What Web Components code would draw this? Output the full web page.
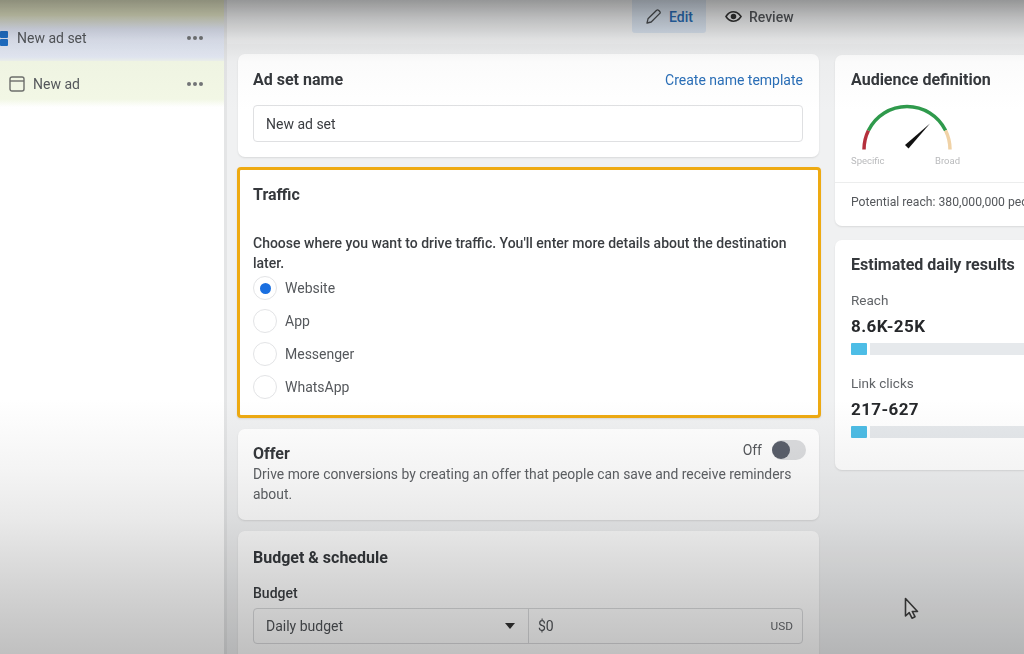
<!DOCTYPE html>
<html lang="en">
<head>
<meta charset="utf-8">
<title>New ad set</title>
<style>
  html, body { margin: 0; height: 654px; overflow: hidden; background: #f0f1f2; }
  body { font-family: Roboto, "Liberation Sans", sans-serif; color: #2f3237; }
</style>
</head>
<body>
<ads-shell>
  <side-nav slot="nav">
    <nav-row tone="set" label="New ad set"></nav-row>
    <nav-row tone="ad" label="New ad"></nav-row>
  </side-nav>
  <top-tabs slot="tabs"></top-tabs>

  <ad-card slot="main" class="name-card">
    <card-head title="Ad set name"><a-link>Create name template</a-link></card-head>
    <text-box value="New ad set"></text-box>
  </ad-card>

  <ad-card slot="main" highlight>
    <card-head title="Traffic"></card-head>
    <traffic-options></traffic-options>
  </ad-card>

  <ad-card slot="main">
    <offer-block></offer-block>
  </ad-card>

  <ad-card slot="main" grow>
    <card-head title="Budget &amp; schedule"></card-head>
    <budget-row></budget-row>
  </ad-card>

  <ad-card slot="side" class="side-card">
    <audience-gauge></audience-gauge>
  </ad-card>

  <ad-card slot="side" class="side-card">
    <daily-results>
      <result-metric label="Reach" value="8.6K-25K"></result-metric>
      <result-metric label="Link clicks" value="217-627"></result-metric>
    </daily-results>
  </ad-card>
</ads-shell>

<script>
class AdsShell extends HTMLElement {
  constructor() {
    super();
    this.attachShadow({ mode: "open" });
    this.shadowRoot.innerHTML = `
      <style>
        :host { display: flex; width: 1024px; height: 654px; position: relative; overflow: hidden; }
        .nav { width: 224px; flex: none; background: #fff; border-right: 3px solid #e4e5e6; filter: blur(.4px); }
        .content { flex: 1; min-width: 0; display: flex; flex-direction: column; filter: blur(.4px); }
        .tabs { height: 44px; flex: none; background: #f3f4f5; }
        .columns { flex: 1; min-height: 0; display: flex; gap: 14px; padding: 10px 0 0 10px; }
        .main { width: 584px; flex: none; display: flex; flex-direction: column; gap: 11px; }
        .side { flex: 1; min-width: 0; display: flex; flex-direction: column; gap: 13px; margin-right: -12px; }
        .shade {
          position: absolute; inset: 0; pointer-events: none; mix-blend-mode: multiply;
          background: linear-gradient(to bottom,
            #9d9d9d 0, #c6c6c6 18px, #ececec 40px, #fbfbfb 62px, #fff 110px,
            #fff 400px, #f4f4f4 470px, #e9e9e9 520px, #d6d6d6 580px, #c0c0c0 654px);
        }
        .cursor { position: absolute; left: 904px; top: 597px; }
      </style>
      <div class="nav"><slot name="nav"></slot></div>
      <div class="content">
        <div class="tabs"><slot name="tabs"></slot></div>
        <div class="columns">
          <div class="main"><slot name="main"></slot></div>
          <div class="side"><slot name="side"></slot></div>
        </div>
      </div>
      <div class="shade"></div>
      <svg class="cursor" width="18" height="26" viewBox="0 0 18 26">
        <path d="M1.5 1.5V19l3.7-3.4 2.8 5.6 3-1.5-2.7-5.2h5.2z" fill="#c9c9c9" stroke="#333" stroke-width="1.6" stroke-linejoin="round"/>
      </svg>
    `;
  }
}
customElements.define("ads-shell", AdsShell);

class SideNav extends HTMLElement {
  constructor() {
    super();
    this.attachShadow({ mode: "open" });
    this.shadowRoot.innerHTML = `
      <style>
        :host { display: block; }
        .tint { height: 15px; background: #e6e8c8; }
      </style>
      <div class="tint"></div>
      <slot></slot>
    `;
  }
}
customElements.define("side-nav", SideNav);

class NavRow extends HTMLElement {
  constructor() {
    super();
    this.attachShadow({ mode: "open" });
    const isSet = this.getAttribute("tone") === "set";
    const lead = isSet
      ? `<span class="mark"><i></i><i></i></span>`
      : `<svg class="page" width="16" height="16" viewBox="0 0 16 16" fill="none" stroke="#6d6f6c" stroke-width="1.4">
           <rect x="1" y="1" width="14" height="14" rx="2"/><path d="M1 5h14"/>
         </svg>`;
    this.shadowRoot.innerHTML = `
      <style>
        :host { display: flex; align-items: center; height: 46px; font-size: 14px; color: #55585c; }
        :host([tone="set"]) { background: linear-gradient(#e6e8c8 0, #e3e8f6 14px, #e6ebf6 42px, #eef2ee 46px); }
        :host([tone="ad"]) { background: linear-gradient(#f3f8e6 0, #f3f8e6 38px, #fff 46px); }
        .mark { width: 8px; margin: 0 9px 0 0; display: flex; flex-direction: column; gap: 1px; }
        .mark i { display: block; height: 7px; background: #1f70c8; border-radius: 1px; }
        .page { margin: 0 8px 0 9px; }
        .label { flex: 1; }
        .dots { display: flex; gap: 2px; margin-right: 21px; }
        .dots i { width: 4px; height: 4px; border-radius: 50%; background: #737578; }
      </style>
      ${lead}<span class="label">${this.getAttribute("label")}</span>
      <span class="dots"><i></i><i></i><i></i></span>
    `;
  }
}
customElements.define("nav-row", NavRow);

class TopTabs extends HTMLElement {
  constructor() {
    super();
    this.attachShadow({ mode: "open" });
    this.shadowRoot.innerHTML = `
      <style>
        :host { display: flex; height: 33px; padding-left: 405px; font-size: 14px; font-weight: 500; }
        .tab { display: flex; align-items: center; gap: 7px; padding: 0 13px; height: 33px; color: #55585c; }
        .on { background: #dbe5f1; color: #2a6db5; padding: 0 13px; border-radius: 0 0 3px 3px; }
        .tab + .tab { padding-left: 19px; }
      </style>
      <div class="tab on">
        <svg width="17" height="17" viewBox="0 0 17 17" fill="none" stroke="#4a4d50" stroke-width="1.3" stroke-linejoin="round">
          <path d="M2 15l1-4.2L11.6 2.2a1.3 1.3 0 0 1 1.9 0l1.3 1.3a1.3 1.3 0 0 1 0 1.9L6.2 14z"/>
        </svg>
        Edit
      </div>
      <div class="tab">
        <svg width="17" height="17" viewBox="0 0 17 17" fill="none" stroke="#333" stroke-width="1.6">
          <path d="M1 8.500C3 5.300 5.500 3.800 8.500 3.800s5.500 1.500 7.500 4.700c-2 3.200-4.500 4.700-7.500 4.700S3 11.700 1 8.500z"/>
          <circle cx="8.500" cy="8.500" r="2" fill="#333"/>
        </svg>
        Review
      </div>
    `;
  }
}
customElements.define("top-tabs", TopTabs);

class AdCard extends HTMLElement {
  constructor() {
    super();
    this.attachShadow({ mode: "open" });
    this.shadowRoot.innerHTML = `
      <style>
        :host {
          display: block; box-sizing: border-box; flex: none; background: #fff;
          border-radius: 7px; padding: 15px 16px 15px 15px; margin: 0 2px 0 1px;
          box-shadow: 0 1px 2px rgba(0,0,0,.1);
        }
        :host(.name-card) { height: 103px; --head-nudge: 1px; --box-gap: 15px; }
        :host(.side-card) { margin: 1px 0 0; padding: 15px 16px; }
        :host([highlight]) { height: 251px; margin: -1px 0 0; padding: 15px 13px; border: 3px solid #eeaa12; border-radius: 4px; }
        :host([grow]) { flex: 1; border-radius: 7px 7px 0 0; padding-top: 17px; }
      </style>
      <slot></slot>
    `;
  }
}
customElements.define("ad-card", AdCard);

class CardHead extends HTMLElement {
  constructor() {
    super();
    this.attachShadow({ mode: "open" });
    this.shadowRoot.innerHTML = `
      <style>
        :host { display: flex; justify-content: space-between; align-items: center; line-height: 20px; }
        h2 { margin: 0; padding-top: var(--head-nudge, 0); font-size: 16px; font-weight: 700; color: #35383c; }
      </style>
      <h2>${this.getAttribute("title")}</h2>
      <slot></slot>
    `;
  }
}
customElements.define("card-head", CardHead);

class ALink extends HTMLElement {
  constructor() {
    super();
    this.attachShadow({ mode: "open" });
    this.shadowRoot.innerHTML = `
      <style>:host { font-size: 14px; color: #2a6fb8; }</style>
      <slot></slot>
    `;
  }
}
customElements.define("a-link", ALink);

class TextBox extends HTMLElement {
  constructor() {
    super();
    this.attachShadow({ mode: "open" });
    this.shadowRoot.innerHTML = `
      <style>
        :host {
          display: flex; align-items: center; box-sizing: border-box; height: 37px; margin-top: var(--box-gap, 16px);
          padding: 0 12px; border: 1px solid #dfe0e2; border-radius: 4px; font-size: 14px; color: #3a3c40;
        }
      </style>
      ${this.getAttribute("value")}
    `;
  }
}
customElements.define("text-box", TextBox);

class TrafficOptions extends HTMLElement {
  constructor() {
    super();
    this.attachShadow({ mode: "open" });
    const opts = ["Website", "App", "Messenger", "WhatsApp"];
    this.shadowRoot.innerHTML = `
      <style>
        :host { display: block; padding-top: 28px; }
        p { margin: 0 0 -1.5px; font-size: 14px; line-height: 20px; font-weight: 500; color: #3a3d41; }
        .opt { display: flex; align-items: center; gap: 8px; height: 33px; font-size: 14px; color: #55585c; }
        .dot { box-sizing: border-box; width: 24px; height: 24px; border-radius: 50%; border: 1.5px solid #e3e4e6; display: flex; align-items: center; justify-content: center; }
        .dot i { width: 11px; height: 11px; border-radius: 50%; background: #1a6fe0; }
      </style>
      <p>Choose where you want to drive traffic. You'll enter more details about the destination later.</p>
      ${opts.map((o, n) => `<div class="opt"><span class="dot">${n === 0 ? "<i></i>" : ""}</span>${o}</div>`).join("")}
    `;
  }
}
customElements.define("traffic-options", TrafficOptions);

class OfferBlock extends HTMLElement {
  constructor() {
    super();
    this.attachShadow({ mode: "open" });
    this.shadowRoot.innerHTML = `
      <style>
        :host { display: block; height: 61px; position: relative; }
        h2 { margin: 0; font-size: 16px; font-weight: 700; line-height: 20px; color: #35383c; }
        p { margin: 0; font-size: 13.900px; line-height: 20px; color: #5f6266; }
        .toggle { position: absolute; right: -3px; top: -4px; display: flex; align-items: center; gap: 10px; font-size: 14px; color: #55585c; }
        .track { width: 34px; height: 20px; border-radius: 10px; background: #dcdddf; position: relative; }
        .track i { position: absolute; left: 0; top: 1px; width: 18px; height: 18px; border-radius: 50%; background: #5a5f6b; }
      </style>
      <h2>Offer</h2>
      <div class="toggle">Off<span class="track"><i></i></span></div>
      <p>Drive more conversions by creating an offer that people can save and receive reminders about.</p>
    `;
  }
}
customElements.define("offer-block", OfferBlock);

class BudgetRow extends HTMLElement {
  constructor() {
    super();
    this.attachShadow({ mode: "open" });
    this.shadowRoot.innerHTML = `
      <style>
        :host { display: block; padding-top: 15px; }
        label { display: block; font-size: 14px; font-weight: 500; line-height: 20px; color: #3a3d41; margin-bottom: 5px; }
        .box { display: flex; box-sizing: border-box; height: 36px; border: 1px solid #dadbdd; border-radius: 4px; font-size: 14px; color: #505357; }
        .sel { width: 275px; flex: none; box-sizing: border-box; padding: 0 13px 0 12px; border-right: 1px solid #dadbdd; display: flex; align-items: center; justify-content: space-between; }
        .caret { width: 0; height: 0; border: 5px solid transparent; border-top: 6px solid #333; border-bottom: 0; }
        .amt { flex: 1; padding: 0 9px; display: flex; align-items: center; justify-content: space-between; }
        .cur { font-size: 11.800px; color: #66696d; }
      </style>
      <label>Budget</label>
      <div class="box">
        <div class="sel">Daily budget<span class="caret"></span></div>
        <div class="amt">$0<span class="cur">USD</span></div>
      </div>
    `;
  }
}
customElements.define("budget-row", BudgetRow);

class AudienceGauge extends HTMLElement {
  constructor() {
    super();
    this.attachShadow({ mode: "open" });
    this.shadowRoot.innerHTML = `
      <style>
        :host { display: block; height: 141px; }
        h2 { margin: 0; font-size: 16px; font-weight: 700; line-height: 20px; color: #35383c; white-space: nowrap; }
        svg { display: block; margin-top: 11px; }
        .foot { margin: 11px -16px 0; padding: 12px 16px 0; border-top: 1px solid #eceded; font-size: 12.200px; color: #55585c; white-space: nowrap; }
        text { font-family: Roboto, "Liberation Sans", sans-serif; font-size: 9.500px; fill: #b9babc; }
      </style>
      <h2>Audience definition</h2>
      <svg width="120" height="70" viewBox="0 0 120 70" fill="none" stroke-width="3.500">
        <path d="M13 48.500A43 43 0 0 1 17.400 29.500" stroke="#b5303c"/>
        <path d="M17.400 29.500A43 43 0 0 1 94.600 29.500" stroke="#2f9a4c"/>
        <path d="M94.600 29.500A43 43 0 0 1 99 48.500" stroke="#f0d2a6"/>
        <path d="M54 44L79 22.500 57.500 47.500z" fill="#111"/>
        <text x="0" y="63">Specific</text>
        <text x="84" y="63">Broad</text>
      </svg>
      <div class="foot">Potential reach: 380,000,000 people</div>
    `;
  }
}
customElements.define("audience-gauge", AudienceGauge);

class DailyResults extends HTMLElement {
  constructor() {
    super();
    this.attachShadow({ mode: "open" });
    this.shadowRoot.innerHTML = `
      <style>
        :host { display: block; height: 200px; }
        h2 { margin: 0 0 16px; font-size: 16px; font-weight: 700; line-height: 20px; color: #35383c; white-space: nowrap; }
      </style>
      <h2>Estimated daily results</h2>
      <slot></slot>
    `;
  }
}
customElements.define("daily-results", DailyResults);

class ResultMetric extends HTMLElement {
  constructor() {
    super();
    this.attachShadow({ mode: "open" });
    this.shadowRoot.innerHTML = `
      <style>
        :host { display: block; margin-bottom: 19.500px; margin-right: -16px; }
        .lab { font-size: 13.500px; line-height: 18px; color: #616468; }
        .val { font-size: 17px; font-weight: 700; line-height: 26px; color: #26282b; margin-top: 3.500px; letter-spacing: .4px; }
        .bar { display: flex; gap: 3px; height: 12px; margin-top: 4px; }
        .bar i { width: 16px; background: #4dbde6; border-radius: 1px; }
        .bar b { flex: 1; background: #e6e9ec; }
      </style>
      <div class="lab">${this.getAttribute("label")}</div>
      <div class="val">${this.getAttribute("value")}</div>
      <div class="bar"><i></i><b></b></div>
    `;
  }
}
customElements.define("result-metric", ResultMetric);
</script>
</body>
</html>
